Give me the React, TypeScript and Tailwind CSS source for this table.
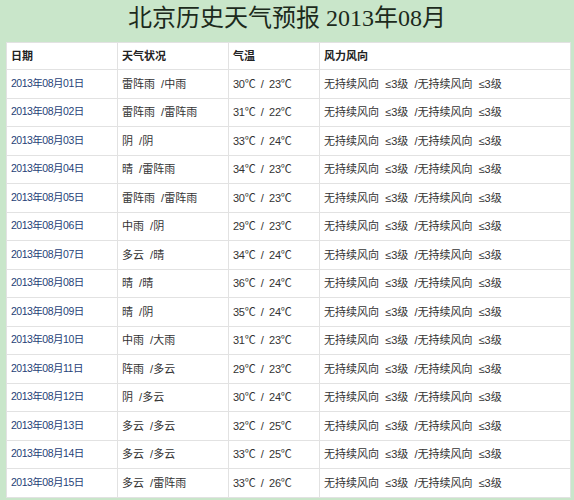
import React from 'react';

type Row = {
  date: string;
  weather: string;
  temp: string;
  wind: string;
};

const WIND = '无持续风向  ≤3级  /无持续风向  ≤3级';

const rows: Row[] = [
  { date: '2013年08月01日', weather: '雷阵雨  /中雨', temp: '30℃  /  23℃', wind: WIND },
  { date: '2013年08月02日', weather: '雷阵雨  /雷阵雨', temp: '31℃  /  22℃', wind: WIND },
  { date: '2013年08月03日', weather: '阴  /阴', temp: '33℃  /  24℃', wind: WIND },
  { date: '2013年08月04日', weather: '晴  /雷阵雨', temp: '34℃  /  23℃', wind: WIND },
  { date: '2013年08月05日', weather: '雷阵雨  /雷阵雨', temp: '30℃  /  23℃', wind: WIND },
  { date: '2013年08月06日', weather: '中雨  /阴', temp: '29℃  /  23℃', wind: WIND },
  { date: '2013年08月07日', weather: '多云  /晴', temp: '34℃  /  24℃', wind: WIND },
  { date: '2013年08月08日', weather: '晴  /晴', temp: '36℃  /  24℃', wind: WIND },
  { date: '2013年08月09日', weather: '晴  /阴', temp: '35℃  /  24℃', wind: WIND },
  { date: '2013年08月10日', weather: '中雨  /大雨', temp: '31℃  /  23℃', wind: WIND },
  { date: '2013年08月11日', weather: '阵雨  /多云', temp: '29℃  /  23℃', wind: WIND },
  { date: '2013年08月12日', weather: '阴  /多云', temp: '30℃  /  24℃', wind: WIND },
  { date: '2013年08月13日', weather: '多云  /多云', temp: '32℃  /  25℃', wind: WIND },
  { date: '2013年08月14日', weather: '多云  /多云', temp: '33℃  /  25℃', wind: WIND },
  { date: '2013年08月15日', weather: '多云  /雷阵雨', temp: '33℃  /  26℃', wind: WIND },
];

const cell = 'border border-[#e2e2e2] px-[4px] text-left align-middle whitespace-pre';

export default function App() {
  return (
    <div
      className="w-[574px] h-[500px] overflow-hidden bg-[#c9e6ca]"
      style={{ fontFamily: '"Liberation Sans", "Noto Sans CJK SC", sans-serif' }}
    >
      <h1
        className="h-[42px] flex items-center justify-center text-[24px] leading-none text-[#1c2a1c] pb-[6px]"
        style={{ fontFamily: '"Liberation Serif", "Noto Sans CJK SC", serif' }}
      >
        北京历史天气预报 2013年08月
      </h1>
      <table className="ml-[6px] w-[565px] table-fixed border-collapse bg-white text-[11px] text-[#333]">
        <colgroup>
          <col className="w-[111px]" />
          <col className="w-[111px]" />
          <col className="w-[91px]" />
          <col />
        </colgroup>
        <thead>
          <tr className="h-[27px] font-bold text-[#222]">
            <th className={cell}>日期</th>
            <th className={cell}>天气状况</th>
            <th className={cell}>气温</th>
            <th className={cell}>风力风向</th>
          </tr>
        </thead>
        <tbody>
          {rows.map((r) => (
            <tr key={r.date} className="h-[28.5px]">
              <td className={`${cell} text-[10.5px] tracking-[-0.5px] text-[#1f3f78]`}>{r.date}</td>
              <td className={cell}>{r.weather}</td>
              <td className={`${cell} tracking-[-0.3px]`}>{r.temp}</td>
              <td className={cell}>{r.wind}</td>
            </tr>
          ))}
        </tbody>
      </table>
    </div>
  );
}
